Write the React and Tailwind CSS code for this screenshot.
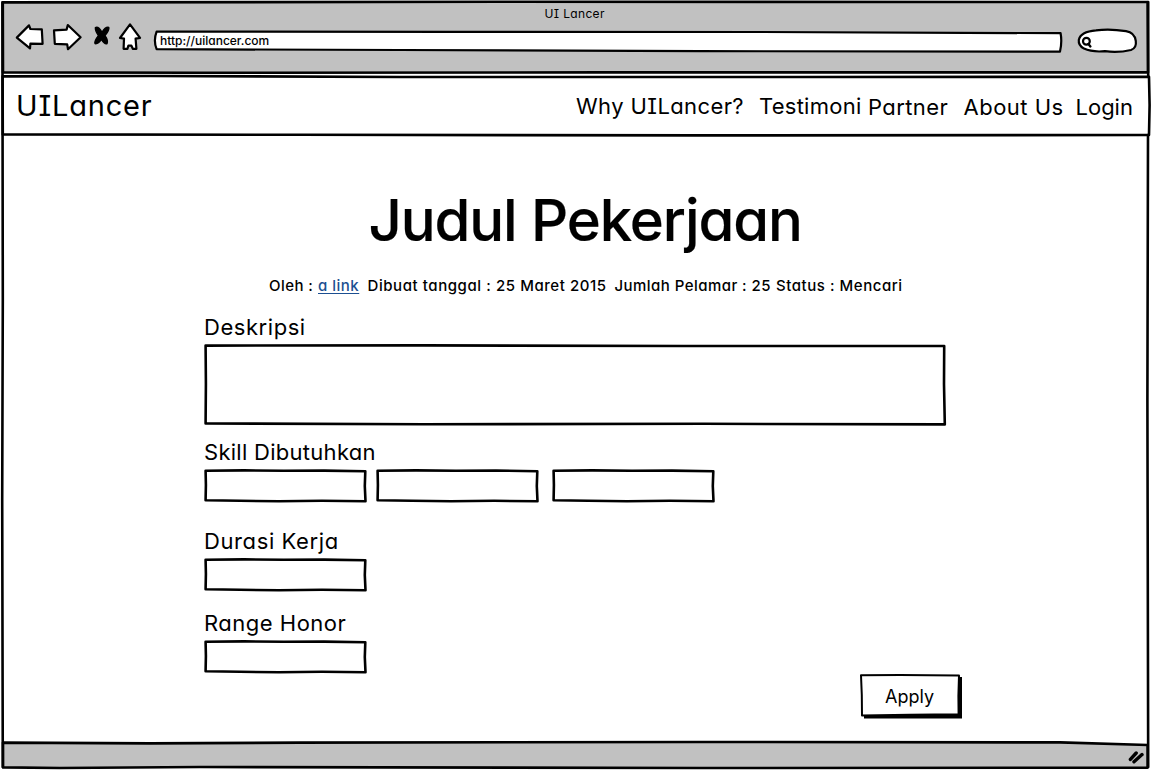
function Sketch({ box, className = "", children }) {
  return (
    <svg viewBox={box} className={"pointer-events-none absolute inset-0 h-full w-full overflow-visible " + className} fill="none" stroke="#000" strokeWidth="2.6" strokeLinecap="round" strokeLinejoin="round" aria-hidden="true">
      {children}
    </svg>
  );
}

function Icon({ box, className, children }) {
  return (
    <svg viewBox={box} className={"shrink-0 " + className} fill="#fff" stroke="#000" strokeWidth="2.2" strokeLinejoin="round" strokeLinecap="round" aria-hidden="true">
      {children}
    </svg>
  );
}

function Field({ className = "" }) {
  return (
    <div className={"relative h-[34px] w-[163px] shrink-0 " + className}>
      <Sketch box="0 0 163 34">
        <path fill="#fff" d="M1.6 1.7 L40 1.4 L80 1.7 L120 1.6 L161.3 2.2 L160.8 17 L161.5 32.2 L118 31.8 L75 32.3 L36 31.8 L1.6 31.2 L1.9 16 Z" />
      </Sketch>
    </div>
  );
}

function Label({ className = "", children }) {
  return <h2 className={"text-[22px] leading-6 font-normal whitespace-nowrap " + className}>{children}</h2>;
}

function Toolbar() {
  return (
    <header className="relative h-[75px] shrink-0">
      <Sketch box="0 0 1151 75">
        <path fill="#c1c1c1" d="M2.8 2.4 L500 1.8 L1147.6 2 L1148 72.4 L600 72.4 L200 72.8 L3 72.4 Z" />
      </Sketch>
      <div className="relative h-[23px] pt-[6px] pl-[544.5px] text-[12px] leading-4 tracking-[0.35px]">UI Lancer</div>
      <div className="relative flex items-start">
        <Icon box="14 23 32 28" className="ml-[14px] h-7 w-8">
          <path d="M16.8 37.6 L29 25.4 L30.4 29 L41.8 29.4 L42.6 43.8 L30.4 43.6 L30 48.4 Z" />
        </Icon>
        <Icon box="51 23 32 28" className="ml-[5px] h-7 w-8">
          <path d="M54 30.4 L66.6 29.6 L67.8 25 L80.6 37.3 L68 49.2 L67.2 44.4 L54.8 43.8 Z" />
        </Icon>
        <Icon box="92 23 20 28" className="ml-[9px] h-7 w-5">
          <path fill="#000" strokeWidth="1.4" d="M95.4 27.6 Q98.4 26 102 32.4 Q105.4 26.6 108.8 27.4 Q109.6 29.8 105 35.6 Q108.4 40.4 107 43.6 Q104.6 44.6 101.4 39.4 Q98 44.4 95 43.6 Q94 41.2 98.4 35.6 Q95 30.6 95.4 27.6 Z" />
        </Icon>
        <Icon box="118 23 24 28" className="ml-[6px] h-7 w-6">
          <path d="M130 24.4 L140 37.8 L135.6 38.6 L136.4 48.8 L132.8 48.8 L131.4 45.6 L128.4 45.6 L127.4 48.8 L123.6 48.8 L124 38.6 L120 38 Z" />
        </Icon>
        <div className="relative mt-[7px] ml-[11px] h-[23px] w-[910px]">
          <Sketch box="153 30 910 23">
            <path fill="#fff" strokeWidth="2.2" d="M156.6 31.6 L450 31.8 L760 32 L1060.6 33.2 Q1062.2 42 1060 51.6 L700 51.2 L400 50 L156.6 49.2 Q153.2 40.5 156.6 31.6 Z" />
          </Sketch>
          <span className="relative block pt-[3px] pl-[7px] text-[12px] leading-4 font-medium">http://uilancer.com</span>
        </div>
        <div className="relative mt-[4px] ml-[14px] h-7 w-[60px]">
          <Sketch box="1077 27 60 28">
            <path fill="#fff" strokeWidth="2.2" d="M1096 30.4 Q1110 28.6 1126 31.2 Q1134.6 32.6 1135.8 41 Q1136.8 48 1131 50 Q1118 53 1105 51.2 Q1092 52.4 1084 48.6 Q1078.2 45.4 1078.8 40 Q1080.6 31.6 1096 30.4 Z" />
            <circle cx="1086.4" cy="41.2" r="3.4" strokeWidth="2.2" />
            <path strokeWidth="2.4" d="M1088.4 44 L1090.4 46.4" />
          </Sketch>
        </div>
      </div>
    </header>
  );
}

function NavBar() {
  return (
    <nav className="relative flex h-[61px] shrink-0 items-start text-[22px] leading-6 whitespace-nowrap">
      <Sketch box="0 75 1151 61">
        <path fill="#fff" d="M2.6 76.4 L150 76 L400 77 L800 77 L1149 76.8 L1149.6 105 L1149 135 L700 135.4 L300 134.8 L2.8 134.4 Z" />
      </Sketch>
      <div className="relative mt-[15px] ml-4 w-[560px] text-[29px] leading-8 tracking-[0.8px]">UILancer</div>
      <a className="relative mt-[19px] w-[183px] tracking-[0.4px]">Why UILancer?</a>
      <a className="relative mt-[19px] w-[109px] tracking-[0.25px]">Testimoni</a>
      <a className="relative mt-5 w-[95.5px] tracking-[0.4px]">Partner</a>
      <a className="relative mt-5 w-[112px] tracking-[0.5px]">About Us</a>
      <a className="relative mt-5">Login</a>
    </nav>
  );
}

export default function App() {
  return (
    <div className="relative flex h-[770px] w-[1151px] flex-col overflow-hidden bg-white font-['Inter',sans-serif] text-black [font-feature-settings:'cv11','cv08','calt'_0]">
      <Toolbar />
      <NavBar />
      <main className="flex h-[606px] shrink-0 flex-col pl-[204px]">
        <h1 className="mt-[54px] ml-[164.5px] text-[58px] leading-[60px] font-medium tracking-[-1.1px] whitespace-nowrap [-webkit-text-stroke:0.2px_#000]">Judul Pekerjaan</h1>
        <div className="mt-[26px] ml-[65px] flex text-[15px] leading-5 font-[450] whitespace-nowrap">
          <span className="w-[49px] tracking-[0.45px]">Oleh :</span>
          <span className="w-[49.5px] tracking-[0.5px]"><a className="text-[#1c4f91] underline underline-offset-2">a link</a></span>
          <span className="w-[247px] tracking-[0.57px]">Dibuat tanggal : 25 Maret 2015</span>
          <span className="w-[161.5px] tracking-[0.45px]">Jumlah Pelamar : 25</span>
          <span className="tracking-[0.55px]">Status : Mencari</span>
        </div>
        <Label className="mt-[19px] tracking-[0.55px]">Deskripsi</Label>
        <div className="relative mt-[5px] h-[82px] w-[742px] shrink-0">
          <Sketch box="0 0 742 82">
            <path d="M1.6 1.6 L220 1.4 L480 2 L740.2 2 L740 40 L740.8 80.4 L500 79.8 L220 80.2 L1.6 79.4 L1.9 40 Z" />
          </Sketch>
        </div>
        <Label className="mt-[14px] tracking-[0.28px]">Skill Dibutuhkan</Label>
        <div className="mt-[5px] flex">
          <Field />
          <Field className="ml-[9px]" />
          <Field className="ml-[13px]" />
        </div>
        <Label className="mt-[26px] tracking-[0.6px]">Durasi Kerja</Label>
        <Field className="mt-[5px]" />
        <Label className="mt-[19px] tracking-[0.5px]">Range Honor</Label>
        <Field className="mt-[5px]" />
        <button className="relative ml-[656px] h-[45px] w-[102px] shrink-0 text-[18px] leading-6">
          <Sketch box="860 674 102 45">
            <path fill="#000" stroke="none" d="M864 677 L962 677 L962 718.6 L864 718.6 Z" />
            <path fill="#fff" strokeWidth="2" d="M861 675.2 L900 675 L959 675.6 L958.4 696 L958.6 714.2 L910 714.8 L862 715.6 L861.8 695 Z" />
          </Sketch>
          <span className="relative block pt-px pr-[3px]">Apply</span>
        </button>
      </main>
      <footer className="relative h-[28px] shrink-0">
        <Sketch box="0 742 1151 28">
          <path fill="#c1c1c1" d="M3 742.6 L150 743.4 L300 742.6 L700 742 L1060 742.4 L1147.6 745 L1147.6 767.6 L700 768 L200 767 L60 768 L3 767.4 Z" />
          <path strokeWidth="3.4" d="M1130.4 759.4 L1136.2 753 M1134 761.8 L1142 754.6" />
        </Sketch>
      </footer>
      <Sketch box="0 0 1151 770" className="z-10">
        <path d="M1148.2 2 L1148.2 76 M1148 135 L1147.4 400 L1148.2 767 M2.8 767 L2.2 500 L2.8 300 L2.4 2.4" />
      </Sketch>
    </div>
  );
}
